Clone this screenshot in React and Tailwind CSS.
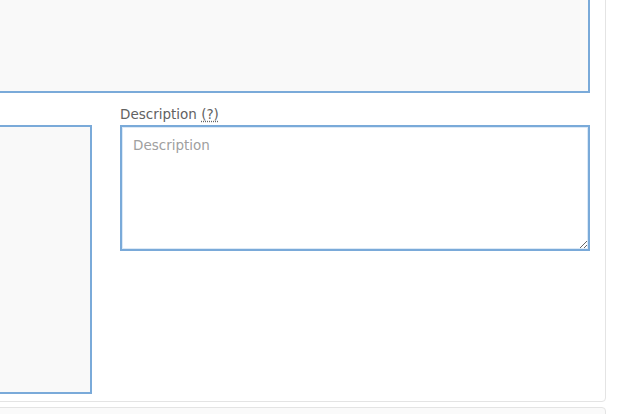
export default function App() {
  return (
    <div
      className="w-[622px] h-[414px] overflow-hidden bg-white"
      style={{ fontFamily: '"DejaVu Sans", "Open Sans", sans-serif' }}
    >
      <div className="-ml-[200px] -mt-[60px] w-[806px] h-[462px] border border-[#e4e4e4] rounded-[4px] bg-white pt-[12px] pl-[15px] pr-[15px]">
        <div className="h-[140px] border-2 border-[#7aaad9] bg-[#f9f9f9]" />

        <div className="mt-[12px] grid grid-cols-[276px_1fr] gap-[28px]">
          <div className="pt-[20px]">
            <div className="h-[269px] border-2 border-[#7aaad9] bg-[#f9f9f9]" />
          </div>

          <div className="flex flex-col">
            <label className="h-[18px] text-[13.5px] leading-[18px] font-normal text-[#626262]">
              Description{' '}
              <span className="underline decoration-dotted underline-offset-2">(?)</span>
            </label>
            <textarea
              placeholder="Description"
              className="mt-[2px] h-[126px] border-2 border-[#7aaad9] bg-white shadow-[inset_0_0_0_1px_#dce9f6] px-[11px] py-[8px] text-[13.5px] font-normal text-[#555] placeholder:text-[#a0a0a0] outline-none"
              style={{ fontFamily: '"DejaVu Sans", sans-serif' }}
            />
          </div>
        </div>
      </div>

      <div className="-ml-[200px] mt-[5px] w-[806px] h-[40px] border border-[#e4e4e4] rounded-[4px] bg-[#fafafa]" />
    </div>
  );
}
